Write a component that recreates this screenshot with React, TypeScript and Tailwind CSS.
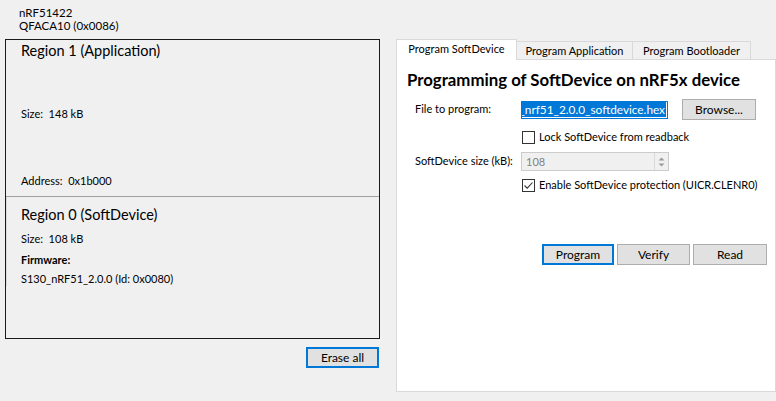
import React from 'react';

const FONT = '"Segoe UI", Lato, "Liberation Sans", sans-serif';

const CheckBox = ({ checked }: { checked?: boolean }) => (
  <span className="flex h-[13px] w-[13px] shrink-0 items-center justify-center border border-[#333333] bg-white">
    {checked && (
      <svg width="11" height="11" viewBox="0 0 11 11">
        <path d="M1.5 5.5 L4.2 8.2 L9.5 2.5" fill="none" stroke="#333333" strokeWidth="1.1" />
      </svg>
    )}
  </span>
);

const WinButton = ({ label, focused, className = '' }: { label: string; focused?: boolean; className?: string }) => (
  <button
    className={`flex h-[21px] items-center justify-center whitespace-nowrap bg-[#e1e1e1] text-[12px] text-black ${
      focused ? 'border-2 border-[#0078d7]' : 'border border-[#adadad]'
    } ${className}`}
  >
    {label}
  </button>
);

export default function App() {
  return (
    <div
      className="flex h-[401px] w-[776px] overflow-hidden whitespace-nowrap bg-[#f0f0f0] text-black"
      style={{ fontFamily: FONT }}
    >
      {/* Left: device memory layout */}
      <div className="ml-[5px] flex w-[375px] flex-col">
        <div className="h-[39px] pl-[14px] pt-[6px] text-[11.5px] leading-[13px]">
          <div>nRF51422</div>
          <div>QFACA10 (0x0086)</div>
        </div>
        <div className="flex h-[300px] flex-col border border-[#1a1a1a]">
          <div className="flex h-[157px] flex-col border-b border-[#a0a0a0] pl-[15px]">
            <div className="text-[14.5px] leading-[22px]">Region 1 (Application)</div>
            <div className="mt-[45px] whitespace-pre text-[11px] leading-[14px]">Size:  148 kB</div>
            <div className="mt-[53px] whitespace-pre text-[11px] leading-[14px]">Address:  0x1b000</div>
          </div>
          <div className="flex flex-col border-l border-[#d8d8d8] pl-[14px] pt-[7px] text-[11px]">
            <div className="text-[14.5px] leading-[22px]">Region 0 (SoftDevice)</div>
            <div className="mt-[6px] whitespace-pre leading-[14px]">Size:  108 kB</div>
            <div className="mt-[7px] font-bold leading-[14px]">Firmware:</div>
            <div className="mt-[5px] leading-[14px]">S130_nRF51_2.0.0 (Id: 0x0080)</div>
          </div>
        </div>
        <div className="mt-[8px] flex justify-end pr-[1px]">
          <WinButton label="Erase all" focused className="h-[20px] w-[73px]" />
        </div>
      </div>

      {/* Right: programming tabs */}
      <div className="ml-[16px] mt-[39px] flex w-[380px] flex-col">
        <div className="flex h-[21px] items-end text-[11px]">
          <div className="relative z-10 flex h-[21px] w-[121px] items-center justify-center border border-b-0 border-[#d9d9d9] bg-white pb-[1px]">
            Program SoftDevice
          </div>
          <div className="flex h-[19px] w-[116px] items-center justify-center border border-l-0 border-b-0 border-[#d9d9d9] bg-[#f0f0f0]">
            Program Application
          </div>
          <div className="flex h-[19px] w-[118px] items-center justify-center border border-l-0 border-b-0 border-[#d9d9d9] bg-[#f0f0f0]">
            Program Bootloader
          </div>
        </div>
        <div className="-mt-px flex h-[333px] flex-col border border-[#d9d9d9] bg-white">
          <div className="pl-[10px] pt-[9px] text-[16.8px] font-bold leading-[22px]">
            Programming of SoftDevice on nRF5x device
          </div>
          <div className="mt-[8px] flex flex-col pl-[18px] text-[11px]">
            <div className="flex h-[21px] items-center">
              <span className="w-[106px]">File to program:</span>
              <div className="flex h-[18px] w-[147px] items-center justify-end overflow-hidden border border-[#0078d7] bg-white pr-px">
                <span className="whitespace-nowrap bg-[#0078d7] pl-[2px] pr-px text-[11.8px] leading-[15px] text-white">
                  _nrf51_2.0.0_softdevice.hex
                </span>
              </div>
              <WinButton label="Browse..." className="ml-[14px] w-[74px] text-[11.5px]" />
            </div>

            <div className="mt-[8px] flex h-[18px] items-center gap-[4px] pl-[107px]">
              <CheckBox />
              <span>Lock SoftDevice from readback</span>
            </div>

            <div className="mt-[6px] flex h-[19px] items-center">
              <span className="w-[106px]">SoftDevice size (kB):</span>
              <div className="flex h-[19px] w-[148px] items-stretch border border-[#cccccc] bg-[#f0f0f0]">
                <span className="flex-1 pl-[4px] leading-[17px] text-[#838383]">108</span>
                <span className="flex w-[14px] flex-col items-center justify-center gap-[2px] border-l border-[#d9d9d9]">
                  <svg width="7" height="4" viewBox="0 0 7 4">
                    <path d="M0.5 3.5 L3.5 0.5 L6.5 3.5 Z" fill="#9a9a9a" />
                  </svg>
                  <svg width="7" height="4" viewBox="0 0 7 4">
                    <path d="M0.5 0.5 L3.5 3.5 L6.5 0.5 Z" fill="#9a9a9a" />
                  </svg>
                </span>
              </div>
            </div>

            <div className="mt-[5px] flex h-[18px] items-center gap-[4px] pl-[107px]">
              <CheckBox checked />
              <span>Enable SoftDevice protection (UICR.CLENR0)</span>
            </div>
          </div>
          <div className="mt-[50px] flex gap-[3px] pl-[145px]">
            <WinButton label="Program" focused className="h-[21px] w-[72px] text-[11.5px]" />
            <WinButton label="Verify" className="w-[73px] text-[11.5px]" />
            <WinButton label="Read" className="w-[74px] text-[11.5px]" />
          </div>
        </div>
      </div>
    </div>
  );
}
